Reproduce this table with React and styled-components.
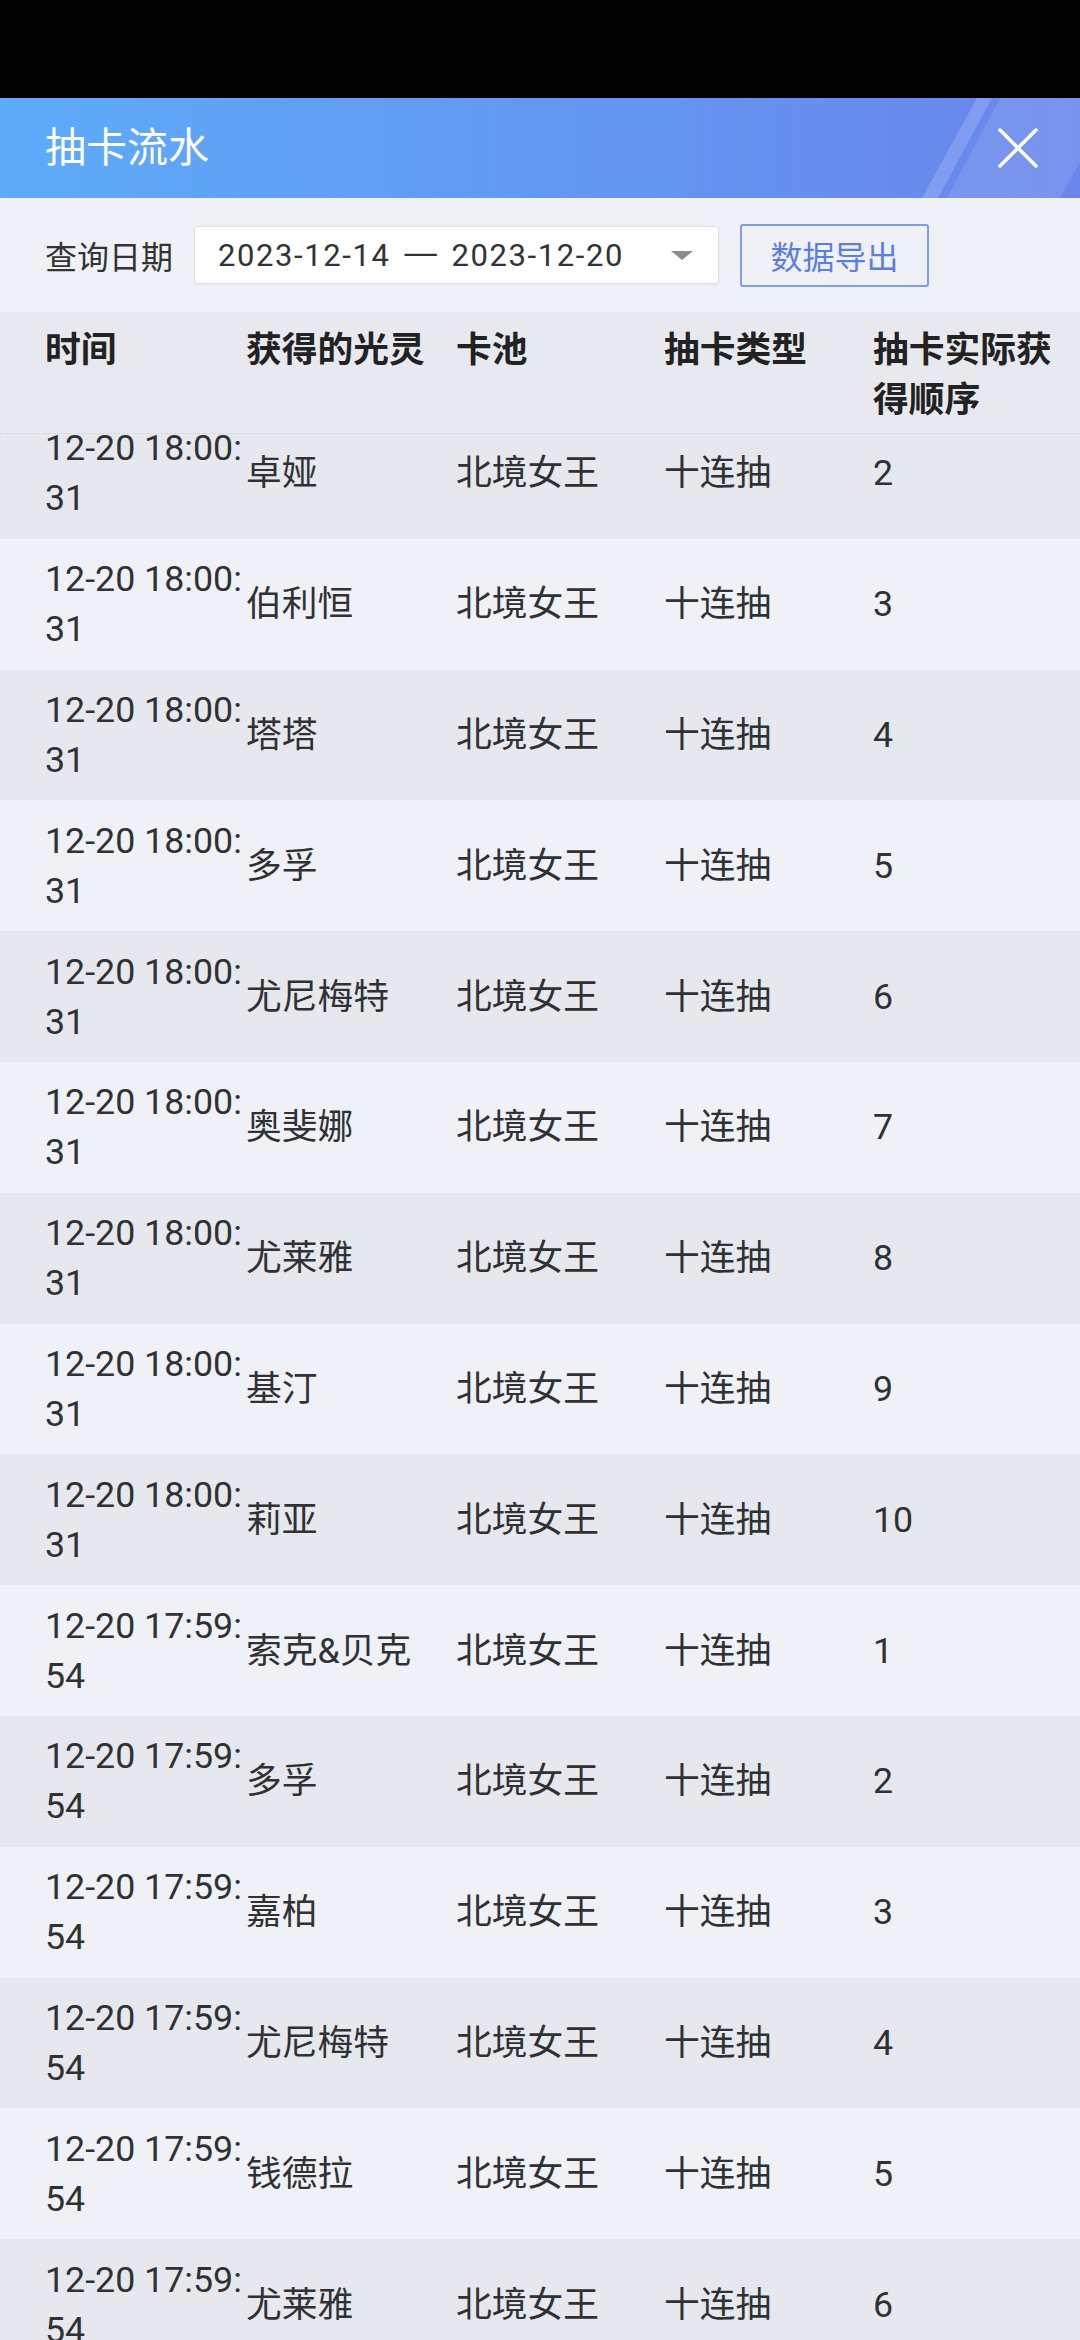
import styled, { createGlobalStyle } from "styled-components";

const GlobalStyle = createGlobalStyle`
  html, body {
    margin: 0;
    padding: 0;
    background: #eff1f7;
  }

  body {
    font-family: Roboto, "Noto Sans CJK SC", sans-serif;
    -webkit-font-smoothing: antialiased;
  }

  * {
    box-sizing: border-box;
  }
`;

const COLUMNS = "201px 210px 208px 209px 1fr";

const records = [
  ["12-20 18:00:31", "卓娅", "北境女王", "十连抽", "2"],
  ["12-20 18:00:31", "伯利恒", "北境女王", "十连抽", "3"],
  ["12-20 18:00:31", "塔塔", "北境女王", "十连抽", "4"],
  ["12-20 18:00:31", "多孚", "北境女王", "十连抽", "5"],
  ["12-20 18:00:31", "尤尼梅特", "北境女王", "十连抽", "6"],
  ["12-20 18:00:31", "奥斐娜", "北境女王", "十连抽", "7"],
  ["12-20 18:00:31", "尤莱雅", "北境女王", "十连抽", "8"],
  ["12-20 18:00:31", "基汀", "北境女王", "十连抽", "9"],
  ["12-20 18:00:31", "莉亚", "北境女王", "十连抽", "10"],
  ["12-20 17:59:54", "索克&贝克", "北境女王", "十连抽", "1"],
  ["12-20 17:59:54", "多孚", "北境女王", "十连抽", "2"],
  ["12-20 17:59:54", "嘉柏", "北境女王", "十连抽", "3"],
  ["12-20 17:59:54", "尤尼梅特", "北境女王", "十连抽", "4"],
  ["12-20 17:59:54", "钱德拉", "北境女王", "十连抽", "5"],
  ["12-20 17:59:54", "尤莱雅", "北境女王", "十连抽", "6"]
];

const HeaderStripes = () => (
  <StripeLayer viewBox="0 0 1080 100" preserveAspectRatio="none">
    <polygon points="977,0 992,0 938,100 922,100" fill="#ffffff" fillOpacity="0.16" />
    <polygon points="1000,0 1080,0 1080,64 1060,100 947,100" fill="#ffffff" fillOpacity="0.1" />
  </StripeLayer>
);

const CloseIcon = () => (
  <svg width="40" height="40" viewBox="0 0 40 40">
    <path
      d="M2 2 L38 38 M38 2 L2 38"
      stroke="#ffffff"
      strokeWidth="3.5"
      strokeLinecap="round"
      fill="none"
    />
  </svg>
);

const App = () => {
  return (
    <Screen>
      <GlobalStyle />
      <StatusBar />

      <Header>
        <HeaderStripes />
        <Title>抽卡流水</Title>
        <CloseButton type="button" aria-label="关闭">
          <CloseIcon />
        </CloseButton>
      </Header>

      <FilterBar>
        <FilterLabel>查询日期</FilterLabel>
        <DatePicker>
          <DateRange>
            <span>2023-12-14</span>
            <Dash>—</Dash>
            <span>2023-12-20</span>
          </DateRange>
          <Caret />
        </DatePicker>
        <ExportButton type="button">数据导出</ExportButton>
      </FilterBar>

      <TableHead>
        <span>时间</span>
        <span>获得的光灵</span>
        <span>卡池</span>
        <span>抽卡类型</span>
        <span>抽卡实际获得顺序</span>
      </TableHead>

      <TableBody>
        <RowList>
          {records.map((r, i) => (
            <Row key={i} $alt={i % 2 === 1}>
              <TimeCell>{r[0]}</TimeCell>
              <span>{r[1]}</span>
              <span>{r[2]}</span>
              <span>{r[3]}</span>
              <span>{r[4]}</span>
            </Row>
          ))}
        </RowList>
      </TableBody>
    </Screen>
  );
};

const Screen = styled.div`
  width: 1080px;
  height: 2340px;
  display: flex;
  flex-direction: column;
  overflow: hidden;
  background: #eff1f7;
`;

const StatusBar = styled.div`
  height: 98px;
  flex-shrink: 0;
  background: #000;
`;

const Header = styled.header`
  position: relative;
  height: 100px;
  flex-shrink: 0;
  display: flex;
  align-items: center;
  justify-content: space-between;
  padding: 0 42px 0 45px;
  overflow: hidden;
  background: linear-gradient(90deg, #5eabf9 0%, #6398f2 50%, #6a86ec 100%);
`;

const StripeLayer = styled.svg`
  position: absolute;
  inset: 0;
  width: 100%;
  height: 100%;
  pointer-events: none;
`;

const Title = styled.h1`
  position: relative;
  margin: 0;
  font-size: 41px;
  font-weight: 400;
  color: #fff;
  line-height: 1;
`;

const CloseButton = styled.button`
  position: relative;
  width: 40px;
  height: 40px;
  padding: 0;
  border: none;
  background: none;
  display: grid;
  place-items: center;
`;

const FilterBar = styled.div`
  height: 114px;
  flex-shrink: 0;
  display: flex;
  align-items: center;
  gap: 21px;
  padding-left: 45px;
  background: #eff1f7;
`;

const FilterLabel = styled.span`
  font-size: 32px;
  color: #333;
`;

const DatePicker = styled.div`
  width: 525px;
  height: 58px;
  display: flex;
  align-items: center;
  justify-content: space-between;
  padding: 0 25px 0 23px;
  background: #fff;
  border: 1px solid #dcdfe6;
  border-radius: 4px;
  box-shadow: 0 1px 2px rgba(0, 0, 0, 0.06);
  font-size: 31px;
  color: #333;
`;

const DateRange = styled.span`
  display: flex;
  align-items: center;
  letter-spacing: 1.6px;
`;

const Dash = styled.span`
  display: inline-block;
  width: 39px;
  margin: 0 12px 0 10px;
  text-align: center;
  letter-spacing: 0;
  transform: scaleX(1.6);
`;

const Caret = styled.i`
  width: 0;
  height: 0;
  border-left: 11px solid transparent;
  border-right: 11px solid transparent;
  border-top: 9px solid #8c8c8c;
`;

const ExportButton = styled.button`
  width: 189px;
  height: 63px;
  padding: 0;
  border: 2px solid #7e9cea;
  border-radius: 3px;
  background: transparent;
  font-family: inherit;
  font-size: 32px;
  color: #5b7fe0;
`;

const TableHead = styled.div`
  height: 122px;
  flex-shrink: 0;
  display: grid;
  grid-template-columns: ${COLUMNS};
  align-items: start;
  padding: 13px 0 0 45px;
  background: #e8e9ef;
  border-bottom: 1px dotted #cdd3e0;
  font-size: 35.75px;
  font-weight: 700;
  line-height: 50px;
  color: #222;
  position: relative;
  z-index: 1;
`;

const TableBody = styled.div`
  flex: 1;
  overflow: hidden;
`;

const RowList = styled.div`
  margin-top: -26px;
`;

const Row = styled.div`
  min-height: 130.8px;
  display: grid;
  grid-template-columns: ${COLUMNS};
  align-items: center;
  padding-left: 45px;
  background: ${({ $alt }) => ($alt ? "#eff1f7" : "#e6e8ee")};
  font-size: 35.75px;
  line-height: 50px;
  color: #303133;
`;

const TimeCell = styled.span`
  word-break: break-all;
`;

export default App;
